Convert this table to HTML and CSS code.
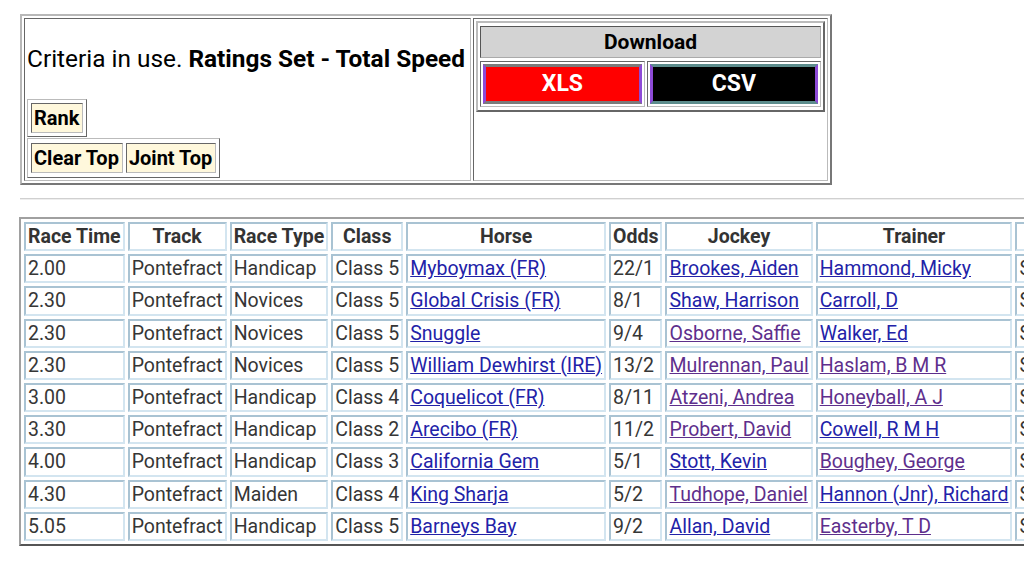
FILE: index.html
```html
<!DOCTYPE html>
<html>
<head>
<meta charset="utf-8">
<link rel="stylesheet" href="styles.css">
</head>
<body>
<div class="page">
  <table class="top">
    <tr>
      <td class="left">
        <div class="criteria">Criteria in use. <b>Ratings Set - Total Speed</b></div>
        <table class="btns"><tr><td>Rank</td></tr></table>
        <table class="btns"><tr><td>Clear Top</td><td>Joint Top</td></tr></table>
      </td>
      <td class="right">
        <table class="dl">
          <tr><th colspan="2">Download</th></tr>
          <tr>
            <td><span class="dlbtn xls">XLS</span></td>
            <td><span class="dlbtn csv">CSV</span></td>
          </tr>
        </table>
      </td>
    </tr>
  </table>
  <hr class="rule">
  <table class="races">
    <tr><th>Race Time</th><th>Track</th><th>Race Type</th><th>Class</th><th>Horse</th><th>Odds</th><th>Jockey</th><th>Trainer</th><th>Sire</th></tr>
    <tr><td>2.00</td><td>Pontefract</td><td>Handicap</td><td>Class 5</td><td><a href="#">Myboymax (FR)</a></td><td>22/1</td><td><a href="#">Brookes, Aiden</a></td><td><a href="#">Hammond, Micky</a></td><td>Sprint Speed</td></tr>
    <tr><td>2.30</td><td>Pontefract</td><td>Novices</td><td>Class 5</td><td><a href="#">Global Crisis (FR)</a></td><td>8/1</td><td><a href="#">Shaw, Harrison</a></td><td><a href="#">Carroll, D</a></td><td>Sprint Speed</td></tr>
    <tr><td>2.30</td><td>Pontefract</td><td>Novices</td><td>Class 5</td><td><a href="#">Snuggle</a></td><td>9/4</td><td><a href="#" class="v">Osborne, Saffie</a></td><td><a href="#">Walker, Ed</a></td><td>Sprint Speed</td></tr>
    <tr><td>2.30</td><td>Pontefract</td><td>Novices</td><td>Class 5</td><td><a href="#">William Dewhirst (IRE)</a></td><td>13/2</td><td><a href="#" class="v">Mulrennan, Paul</a></td><td><a href="#" class="v">Haslam, B M R</a></td><td>Sprint Speed</td></tr>
    <tr><td>3.00</td><td>Pontefract</td><td>Handicap</td><td>Class 4</td><td><a href="#">Coquelicot (FR)</a></td><td>8/11</td><td><a href="#" class="v">Atzeni, Andrea</a></td><td><a href="#" class="v">Honeyball, A J</a></td><td>Sprint Speed</td></tr>
    <tr><td>3.30</td><td>Pontefract</td><td>Handicap</td><td>Class 2</td><td><a href="#">Arecibo (FR)</a></td><td>11/2</td><td><a href="#" class="v">Probert, David</a></td><td><a href="#">Cowell, R M H</a></td><td>Sprint Speed</td></tr>
    <tr><td>4.00</td><td>Pontefract</td><td>Handicap</td><td>Class 3</td><td><a href="#">California Gem</a></td><td>5/1</td><td><a href="#">Stott, Kevin</a></td><td><a href="#" class="v">Boughey, George</a></td><td>Sprint Speed</td></tr>
    <tr><td>4.30</td><td>Pontefract</td><td>Maiden</td><td>Class 4</td><td><a href="#">King Sharja</a></td><td>5/2</td><td><a href="#" class="v">Tudhope, Daniel</a></td><td><a href="#">Hannon (Jnr), Richard</a></td><td>Sprint Speed</td></tr>
    <tr><td>5.05</td><td>Pontefract</td><td>Handicap</td><td>Class 5</td><td><a href="#">Barneys Bay</a></td><td>9/2</td><td><a href="#">Allan, David</a></td><td><a href="#" class="v">Easterby, T D</a></td><td>Sprint Speed</td></tr>
  </table>
</div>
</body>
</html>
```
FILE: styles.css
```css
html, body {
  margin: 0;
  padding: 0;
  overflow: hidden;
  background: #fff;
}
body {
  font-family: Roboto, "Liberation Sans", sans-serif;
  color: #000;
}
.page {
  width: max-content;
  padding: 14px 0 0 20px;
}

/* top panel */
.top {
  width: 812px;
  border: 2px solid;
  border-color: #b8b8b8 #777 #777 #b8b8b8;
  border-spacing: 2px;
}
.top > tbody > tr > td {
  border: 1px solid;
  border-color: #666 #bbb #bbb #666;
  padding: 2px;
  vertical-align: top;
}
.left {
  white-space: nowrap;
}
.right {
  width: 349px;
}
.criteria {
  font-size: 24.4px;
  line-height: 28px;
  margin: 24px 0 26px;
}
.btns {
  border: 1px solid;
  border-color: #bbb #666 #666 #bbb;
  border-spacing: 3px;
  margin: 0;
}
.btns + .btns {
  margin-top: 1px;
  border-spacing: 3px 4px;
}
.btns td {
  background: #fff8dc;
  border: 1px solid;
  border-color: #666 #bbb #bbb #666;
  padding: 2px 3px 2px 2px;
  font-size: 20px;
  line-height: 24px;
  font-weight: bold;
}

/* download box */
.dl {
  width: 100%;
  border: 2px solid;
  border-color: #bbb #666 #666 #bbb;
  border-spacing: 2px 3px;
}
.dl th {
  background: #d3d3d3;
  border: 1px solid;
  border-color: #555 #aaa #aaa #555;
  font-size: 21px;
  line-height: 28px;
  padding: 1px;
}
.dl td {
  border: 1px solid;
  border-color: #666 #bbb #bbb #666;
  padding: 2px;
}
.dlbtn {
  display: block;
  text-align: center;
  font-weight: bold;
  font-size: 23px;
  line-height: 34px;
  color: #fff;
  border-style: solid;
  border-width: 3px;
}
.xls {
  background: #ff0000;
  border-color: #7b7b7b #8d4ad6;
}
.csv {
  background: #000;
  border-color: #5d8d8d #8d4ad6;
}

/* divider */
.rule {
  border: 0;
  border-top: 1px solid #d0d0d0;
  border-bottom: 1px solid #eee;
  margin: 13px 0 17px;
}

/* results table */
.races {
  border: 2px solid;
  border-color: #a0a0a0 #555 #555 #a0a0a0;
  border-spacing: 3px;
  margin-left: -1px;
  font-size: 19.5px;
  color: #363636;
}
.races th,
.races td {
  border: 2px solid;
  border-color: #a9c3d3 #d3e5f0 #d3e5f0 #a9c3d3;
  padding: 1px 2px;
  white-space: nowrap;
  line-height: 23.2px;
  text-align: left;
}
.races th {
  text-align: center;
  color: #333;
}
.races a {
  color: #2222a8;
  text-decoration: underline;
}
.races a.v {
  color: #5e2f8c;
}
```
